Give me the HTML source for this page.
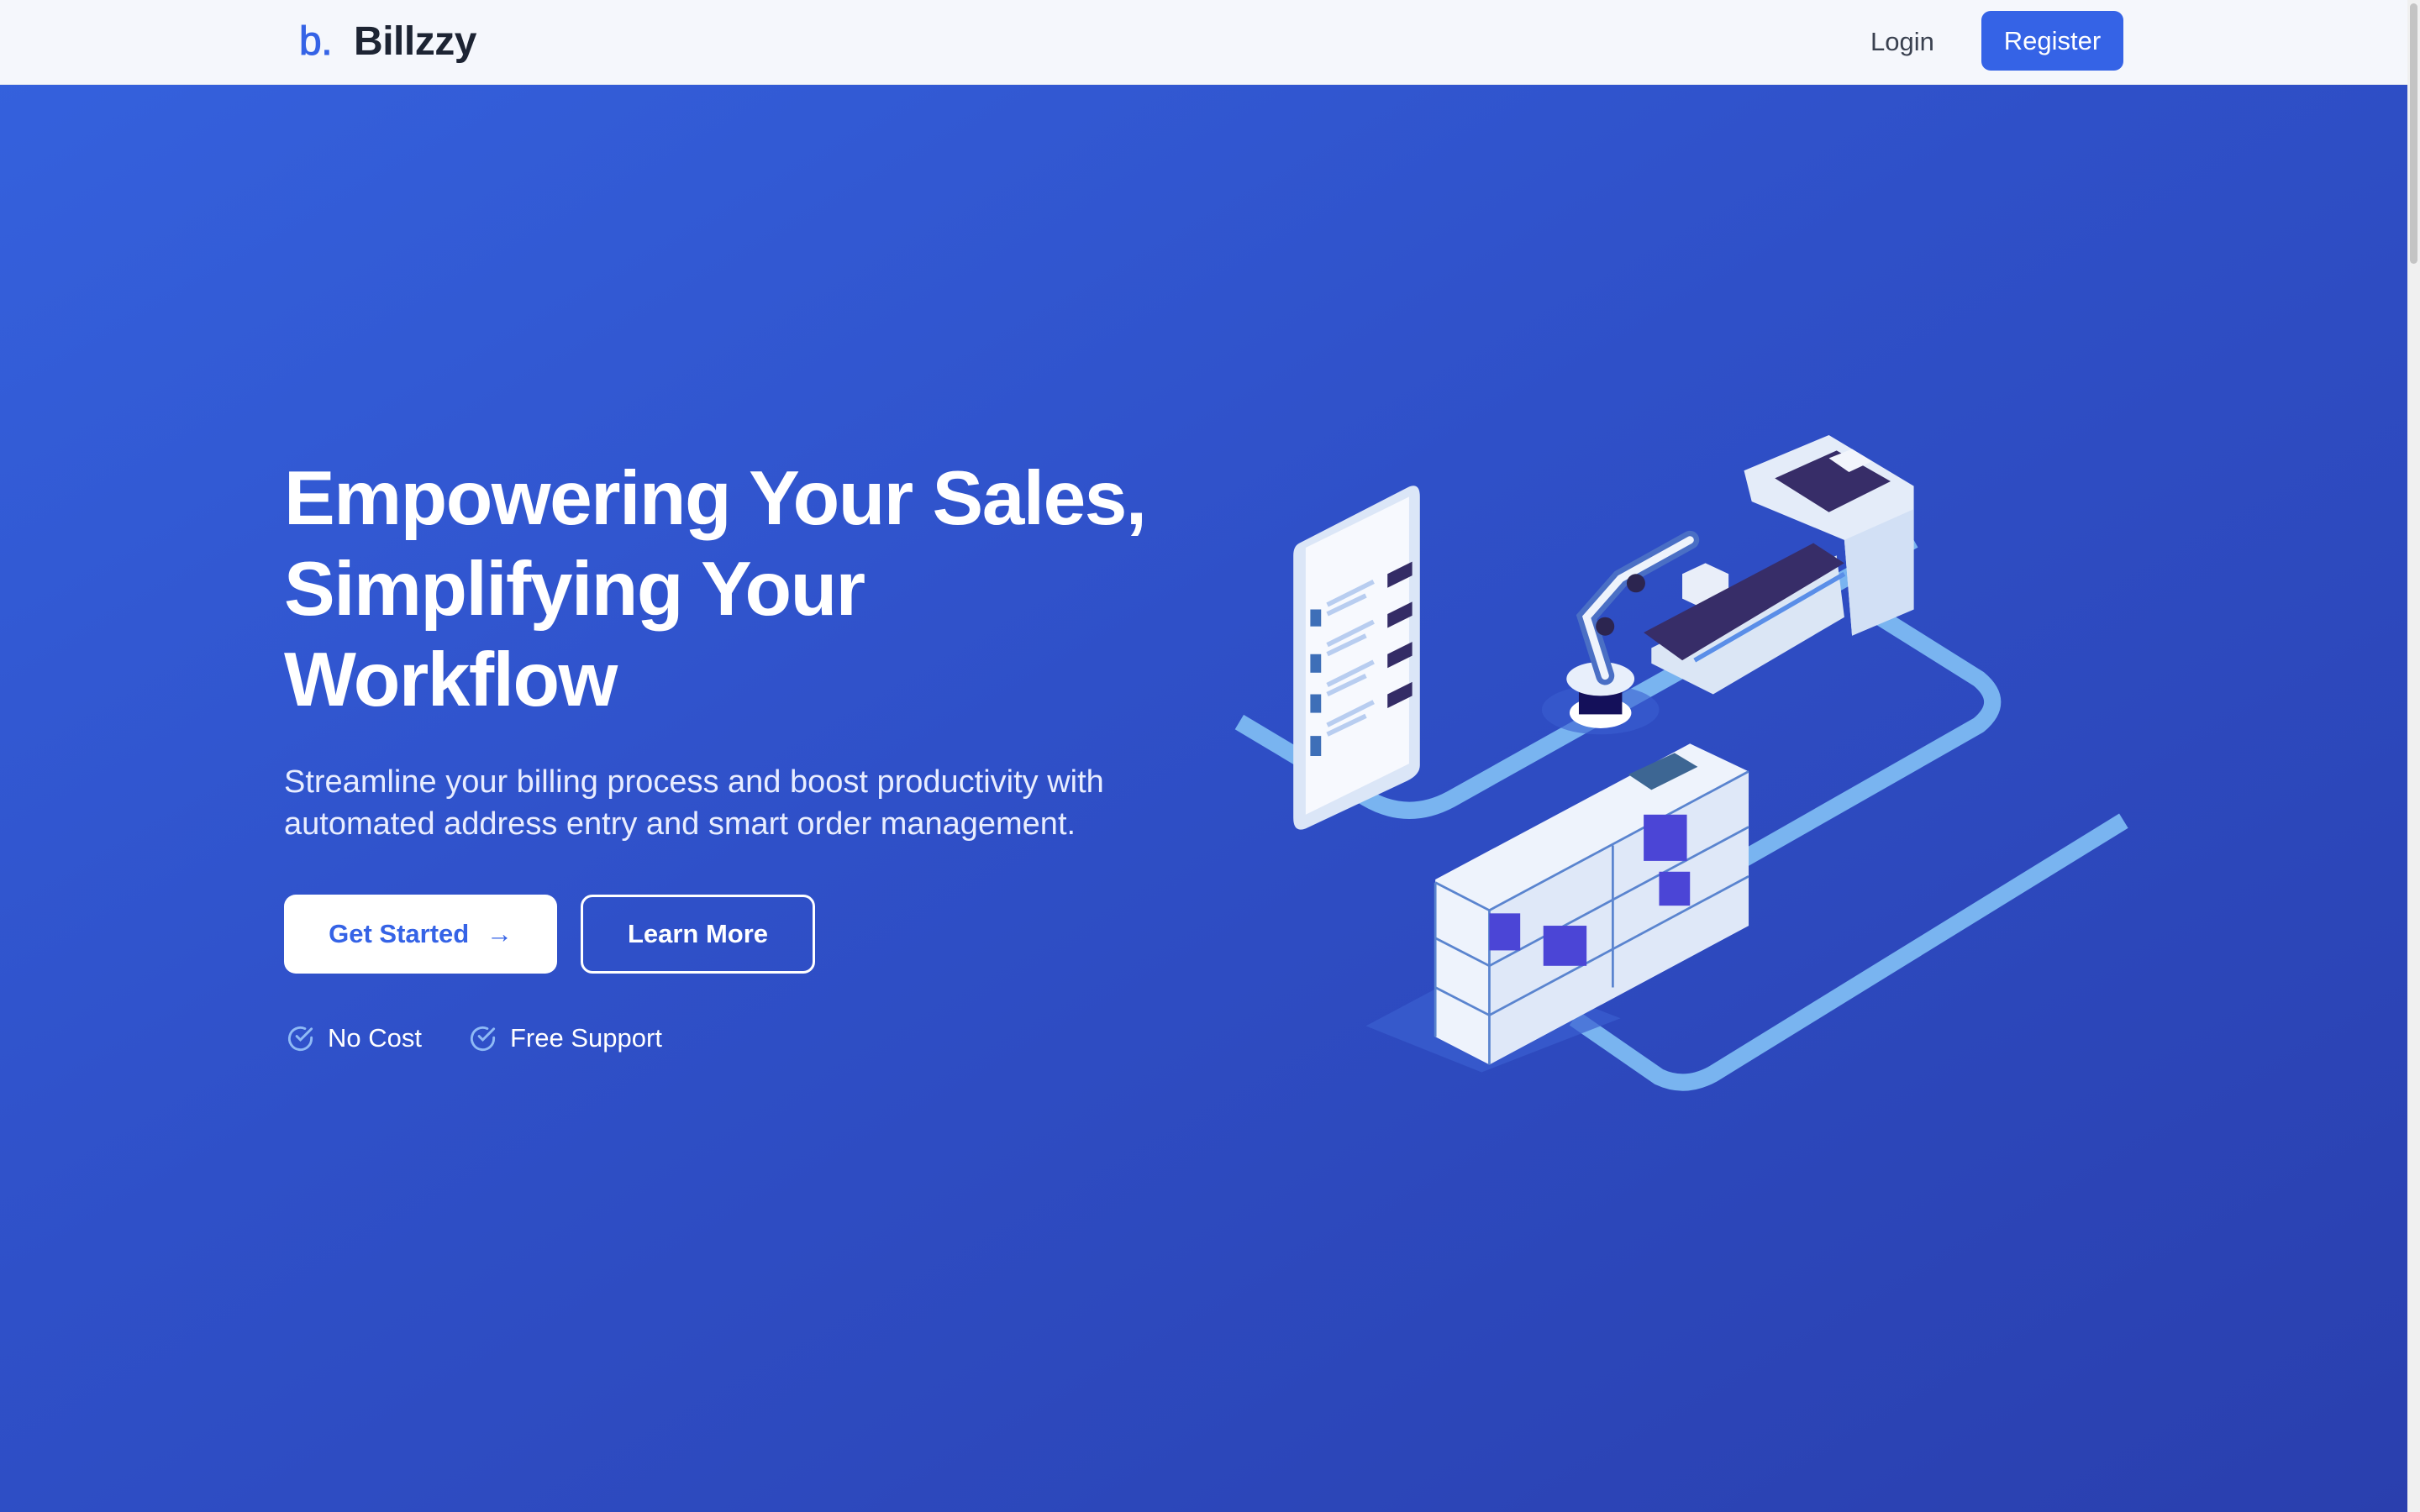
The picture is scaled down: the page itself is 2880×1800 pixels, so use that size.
<!DOCTYPE html>
<html><head><meta charset="utf-8">
<style>
*{margin:0;padding:0;box-sizing:border-box}
html,body{width:2880px;height:1800px;overflow:hidden;font-family:"Liberation Sans",Arial,sans-serif}
body{position:relative;background:linear-gradient(150deg,#3562de 0%,#2f50c8 45%,#2a3fae 100%)}
.nav{position:absolute;left:0;top:0;width:2865px;height:101px;background:#f5f7fc;border-bottom:1px solid #e3e7f0}
.logo{position:absolute;left:356px;top:22px;font-size:48px;color:#1d2433;font-weight:700;letter-spacing:-0.5px}
.logo .b{color:#3563e6;font-weight:400;margin-right:26px;-webkit-text-stroke:1px #3563e6}
.login{position:absolute;left:2226px;top:32px;font-size:31px;color:#3a4150}
.reg{position:absolute;left:2358px;top:13px;width:169px;height:71px;background:#3563e6;border-radius:11px;color:#fff;font-size:31px;text-align:center;line-height:71px}
.scroll{position:absolute;right:0;top:0;width:15px;height:1800px;background:#f0f0f0}
.scroll i{position:absolute;left:3px;top:4px;width:9px;height:310px;background:#c4c4c4;border-radius:5px}
h1{position:absolute;left:338px;top:540px;color:#fff;font-size:91px;line-height:108px;font-weight:700;letter-spacing:-1.5px}
.sub{position:absolute;left:338px;top:906px;color:#e8edff;font-size:38px;line-height:50px;width:1150px}
.btn1{position:absolute;left:338px;top:1065px;width:325px;height:94px;background:#fff;border-radius:14px;color:#3563e6;font-size:31px;font-weight:700;line-height:94px;text-align:center}
.btn2{position:absolute;left:691px;top:1065px;width:279px;height:94px;border:3px solid #fff;border-radius:14px;color:#fff;font-size:31px;font-weight:700;line-height:88px;text-align:center}
.chk{position:absolute;top:1218px;color:#fff;font-size:31px;line-height:36px;display:flex;align-items:center}
.chk svg{margin-right:15px}
</style></head><body>
<div class="nav">
 <div class="logo"><span class="b">b.</span>Billzzy</div>
 <div class="login">Login</div>
 <div class="reg">Register</div>
</div>
<div class="scroll"><i></i></div>
<h1>Empowering Your Sales,<br>Simplifying Your<br>Workflow</h1>
<div class="sub">Streamline your billing process and boost productivity with automated address entry and smart order management.</div>
<div class="btn1">Get Started <span style="font-weight:400;margin-left:12px">&#8594;</span></div>
<div class="btn2">Learn More</div>
<div class="chk" style="left:340px"><svg width="35" height="35" viewBox="0 0 24 24" fill="none" stroke="#8fbaf5" stroke-width="2" stroke-linecap="round"><path d="M21 11.1V12a9 9 0 1 1-5.3-8.2"/><path d="M21 4 12 13l-3-3"/></svg>No Cost</div>
<div class="chk" style="left:557px"><svg width="35" height="35" viewBox="0 0 24 24" fill="none" stroke="#8fbaf5" stroke-width="2" stroke-linecap="round"><path d="M21 11.1V12a9 9 0 1 1-5.3-8.2"/><path d="M21 4 12 13l-3-3"/></svg>Free Support</div>

<svg style="position:absolute;left:0;top:0" width="2880" height="1800" viewBox="0 0 1568 980">
 <g fill="none" stroke="#79b4f0" stroke-width="11" stroke-linejoin="round">
  <path d="M803 468 L885 517 Q912 533 940 518 L1240 350"/>
  <path d="M1215 398 L1282 440 Q1300 455 1282 470 L1110 568"/>
  <path d="M1020 660 L1075 698 Q1092 706 1110 696 L1376 532"/>
 </g>
 <path d="M885 665 L960 625 L1050 660 L960 695 Z" fill="#3a5fd0" opacity=".7"/>
 <path d="M842 352 L912 316 Q920 312 920 322 L920 496 Q920 502 912 506 L846 537 Q838 540 838 530 L838 360 Q838 354 842 352Z" fill="#dbe6f7"/>
 <path d="M846 355 L913 322 L913 495 L846 528 Z" fill="#f7f9fe"/>
 <g fill="#342c66">
  <path d="M899 372 L915 364 L915 373 L899 381Z"/><path d="M899 398 L915 390 L915 399 L899 407Z"/>
  <path d="M899 424 L915 416 L915 425 L899 433Z"/><path d="M899 450 L915 442 L915 451 L899 459Z"/>
 </g>
 <g stroke="#b8cdf0" stroke-width="3">
  <path d="M860 392 L890 377"/><path d="M860 398 L885 386"/><path d="M860 418 L890 403"/><path d="M860 424 L885 412"/>
  <path d="M860 444 L890 429"/><path d="M860 450 L885 438"/><path d="M860 470 L890 455"/><path d="M860 476 L885 464"/>
 </g>
 <g fill="#3e6fb8"><rect x="849" y="395" width="7" height="11"/><rect x="849" y="424" width="7" height="12"/><rect x="849" y="450" width="7" height="12"/><rect x="849" y="477" width="7" height="13"/></g>
 <ellipse cx="1037" cy="460" rx="38" ry="16" fill="#3a5fd0" opacity=".6"/>
 <ellipse cx="1037" cy="462" rx="20" ry="10" fill="#fff"/>
 <rect x="1023" y="445" width="28" height="18" fill="#14105a"/>
 <ellipse cx="1037" cy="440" rx="22" ry="11" fill="#e8effb"/>
 <path d="M1040 438 L1028 400 L1050 375 L1095 350" fill="none" stroke="#4a6fc5" stroke-width="12" stroke-linecap="round"/>
 <path d="M1040 438 L1028 400 L1050 375 L1095 350" fill="none" stroke="#eef3fc" stroke-width="5" stroke-linecap="round"/>
 <circle cx="1040" cy="406" r="6" fill="#2c2550"/><circle cx="1060" cy="378" r="6" fill="#2c2550"/>
 <path d="M1090 372 L1105 365 L1120 372 L1120 388 L1105 395 L1090 388Z" fill="#e9eef9"/>
 <path d="M1070 420 L1190 360 L1195 400 L1110 450 L1070 430Z" fill="#dbe6f5"/>
 <path d="M1065 410 L1175 352 L1195 365 L1090 428 Z" fill="#372d68"/>
 <path d="M1098 428 L1195 372" stroke="#5a8ee8" stroke-width="3"/>
 <path d="M1130 305 L1185 282 L1240 315 L1240 395 L1200 412 L1195 350 L1135 325Z" fill="#e4ecf9"/>
 <path d="M1150 310 L1190 292 L1225 312 L1185 332Z" fill="#372d68"/>
 <path d="M1185 297 L1200 291 L1213 299 L1198 306Z" fill="#f2f5fc"/>
 <path d="M1195 350 L1240 330 L1240 395 L1200 412Z" fill="#d2e0f5"/>
 <path d="M930 570 L1095 482 L1133 500 L1133 600 L965 690 L930 672Z" fill="#eef3fc"/>
 <path d="M965 590 L1133 500 L1133 600 L965 690Z" fill="#dfe8f8"/>
 <g stroke="#5a84cf" stroke-width="1.5" fill="none">
  <path d="M930 572 L965 590 L1133 500"/><path d="M930 608 L965 626 L1133 536"/><path d="M930 640 L965 658 L1133 568"/>
  <path d="M965 590 L965 690"/><path d="M1045 548 L1045 640"/><path d="M930 572 L930 672"/>
 </g>
 <g fill="#4b45d6">
  <rect x="965" y="592" width="20" height="24"/><rect x="1000" y="600" width="28" height="26"/>
  <rect x="1065" y="528" width="28" height="30"/><rect x="1075" y="565" width="20" height="22"/>
 </g>
 <path d="M1055 502 L1085 488 L1100 497 L1070 512Z" fill="#3d6693"/>
</svg>
</body></html>
